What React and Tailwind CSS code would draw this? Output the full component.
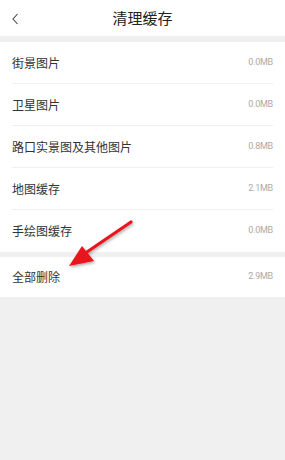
import React from 'react';

const rows = [
  { label: '街景图片', size: '0.0MB' },
  { label: '卫星图片', size: '0.0MB' },
  { label: '路口实景图及其他图片', size: '0.8MB' },
  { label: '地图缓存', size: '2.1MB' },
  { label: '手绘图缓存', size: '0.0MB' },
];

const font = { fontFamily: '"Noto Sans CJK SC", "Noto Sans", sans-serif' };

function Row({ label, size, last, tall = true }) {
  return (
    <div className="px-3">
      <div className={`flex items-center justify-between ${tall ? 'h-[42px]' : 'h-[40px]'} ${last ? '' : 'border-b border-[#f0f0f0]'}`}>
        <span className="text-[12px] text-[#333]">{label}</span>
        <span className="text-[9px] text-[#aaa] tracking-tight" style={{ fontFamily: 'Roboto, sans-serif' }}>{size}</span>
      </div>
    </div>
  );
}

export default function App() {
  return (
    <div className="relative w-[285px] h-[460px] bg-[#f0f0f0] overflow-hidden" style={font}>
      {/* header */}
      <div className="relative h-[36px] bg-white flex items-center justify-center">
        <svg className="absolute left-[11px] top-[13px]" width="9" height="12" viewBox="0 0 9 12">
          <path d="M6.5 1 L2 6 L6.5 11" fill="none" stroke="#444" strokeWidth="1.1" />
        </svg>
        <span className="text-[15px] text-[#222]">清理缓存</span>
      </div>

      <div className="h-[6px]" />

      <div className="bg-white">
        {rows.map((r, i) => (
          <Row key={r.label} {...r} last={i === rows.length - 1} />
        ))}
      </div>

      <div className="h-[5px]" />

      <div className="bg-white">
        <Row label="全部删除" size="2.9MB" last tall={false} />
      </div>

      {/* red arrow annotation */}
      <svg className="absolute left-0 top-0 pointer-events-none" width="285" height="460" viewBox="0 0 285 460">
        <defs>
          <filter id="sh" x="-20%" y="-20%" width="140%" height="140%">
            <feDropShadow dx="1" dy="1.5" stdDeviation="1.5" floodColor="#000" floodOpacity="0.35" />
          </filter>
        </defs>
        <g filter="url(#sh)">
          <line x1="131" y1="222" x2="84" y2="254" stroke="#e8161b" strokeWidth="3.2" strokeLinecap="round" />
          <polygon points="69,266 82,246 94,261" fill="#e8161b" />
        </g>
      </svg>
    </div>
  );
}
